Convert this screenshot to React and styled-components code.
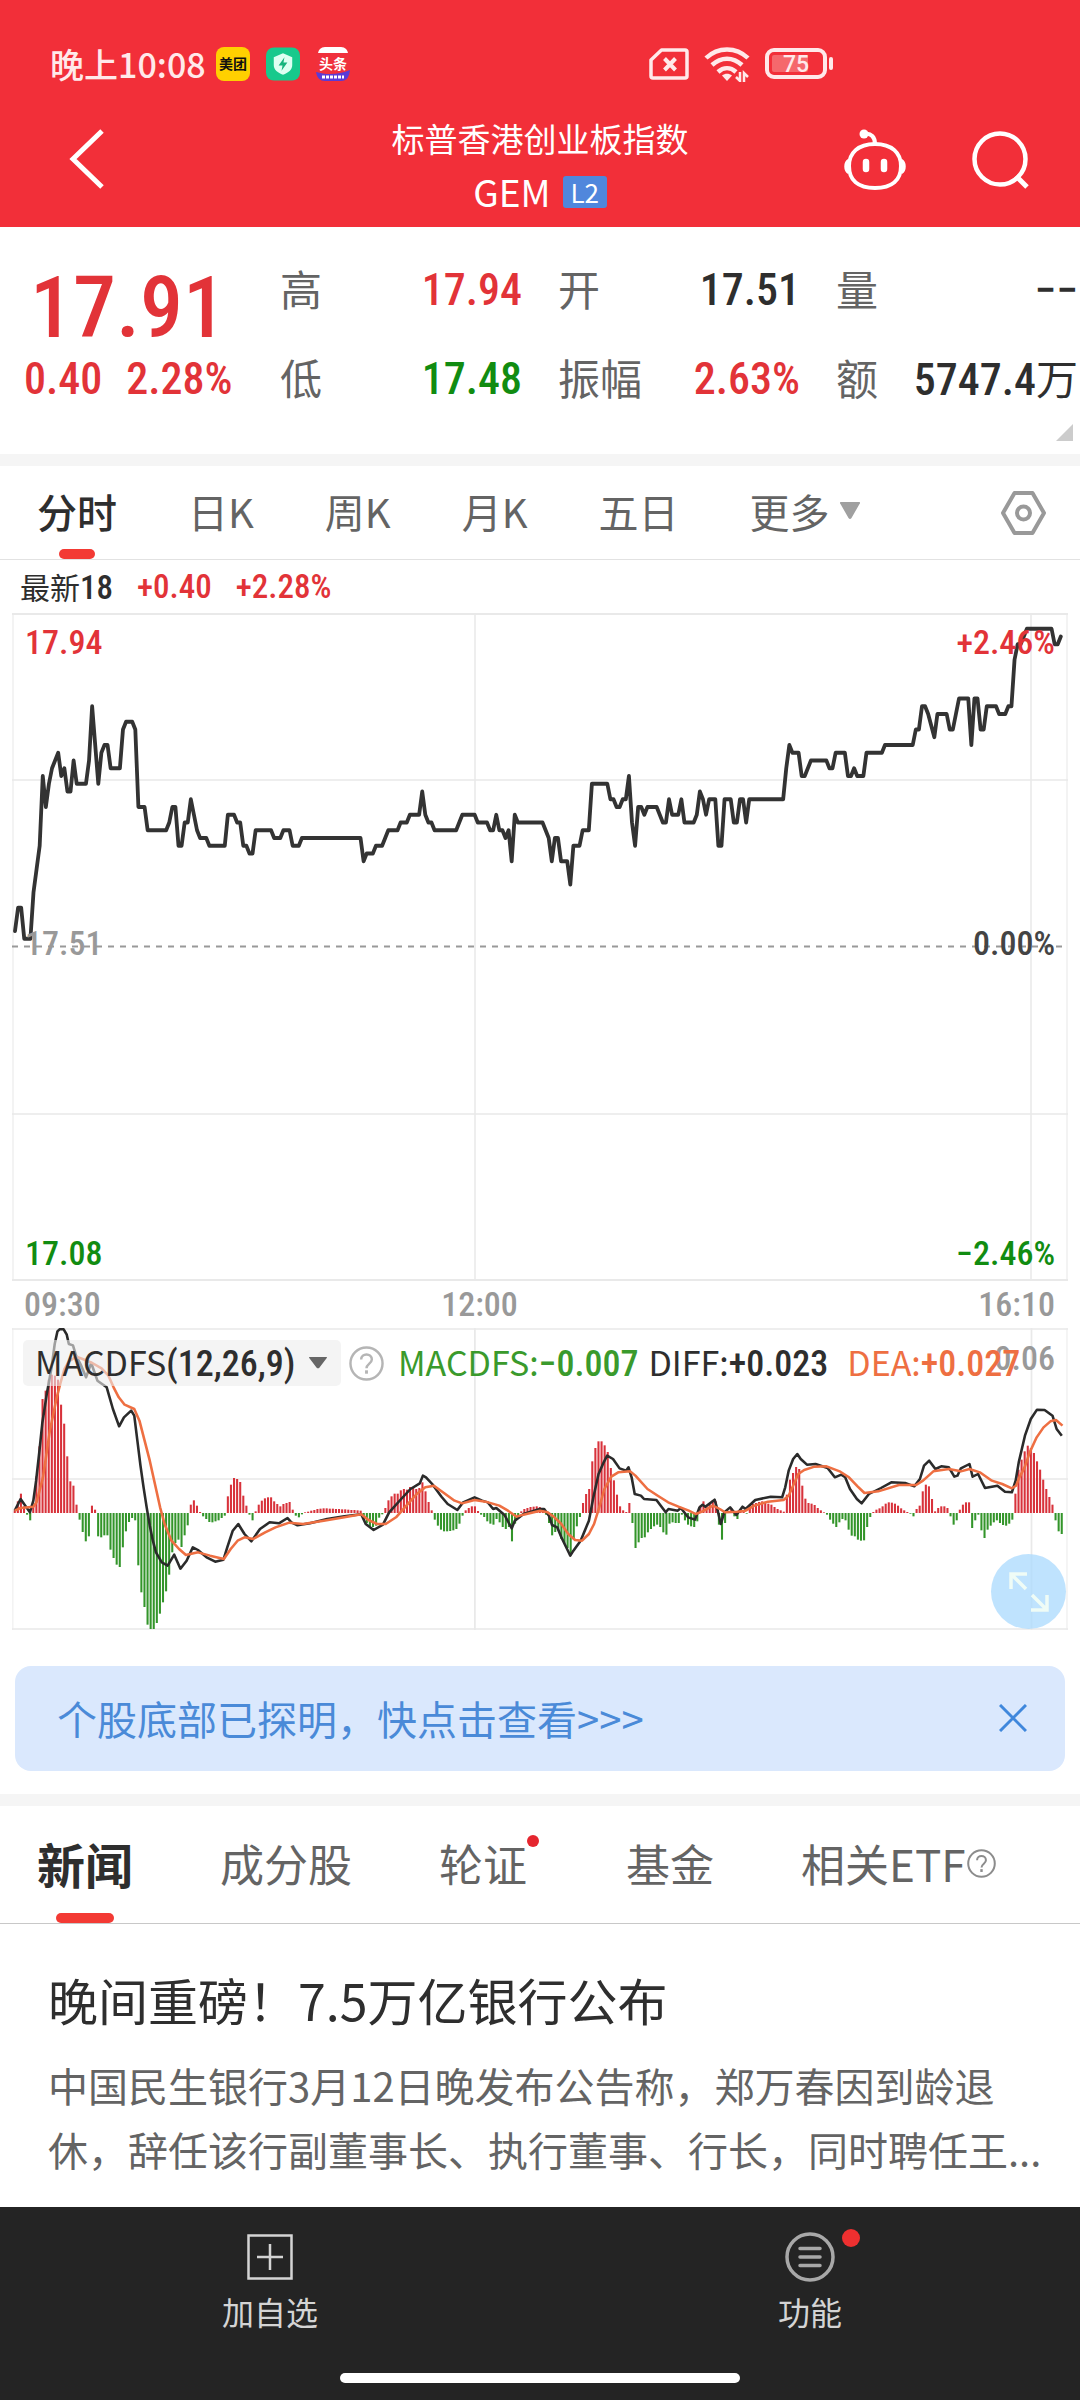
import React, { useState } from "react";
import styled, { createGlobalStyle } from "styled-components";

const RED = "#e23338";
const GREEN = "#118c11";
const DARK = "#2e2e2e";
const GREY = "#646464";
const NUMBER_FONT = `"Roboto Condensed", "Liberation Sans Narrow", Roboto, sans-serif`;

const GlobalStyle = createGlobalStyle`
  * {
    box-sizing: border-box;
  }

  body {
    margin: 0;
    background: #fff;
    color: ${DARK};
    font-family: "Noto Sans CJK SC", "Noto Sans", sans-serif;
  }

  button {
    padding: 0;
    border: 0;
    background: none;
    color: inherit;
    font: inherit;
    cursor: pointer;
  }

  svg {
    display: block;
    flex: none;
  }
`;

const Page = styled.div`
  display: flex;
  flex-direction: column;
  min-height: 100vh;
  overflow-x: hidden;
`;

/* ---------- header ---------- */

const Header = styled.header`
  background: #f22f39;
  color: #fff;
`;

const StatusBar = styled.div`
  display: flex;
  align-items: center;
  justify-content: space-between;
  padding: 44px 246px 0 50px;
  height: 84px;
  color: #ffe9ea;
`;

const StatusGroup = styled.div`
  display: flex;
  align-items: center;
  gap: ${props => props.$gap}px;
`;

const Clock = styled.span`
  margin-right: -6px;
  font-size: 34px;
  font-weight: 500;
  line-height: 40px;
`;

const Nav = styled.nav`
  display: grid;
  grid-template-columns: 1fr auto 1fr;
  padding: 28px 48px 9px 66px;
`;

const NavSide = styled.div`
  display: flex;
  justify-content: ${props => (props.$end ? "flex-end" : "flex-start")};
  align-items: center;
  gap: 63px;
  height: 96px;
`;

const TitleBlock = styled.div`
  display: flex;
  flex-direction: column;
  align-items: center;
  margin-left: -18px;
`;

const Title = styled.h1`
  margin: 0;
  font-size: 33px;
  font-weight: 400;
  line-height: 53px;
`;

const Code = styled.div`
  display: flex;
  align-items: center;
  gap: 12px;
  font-size: 37px;
  line-height: 53px;
`;

const LevelBadge = styled.span`
  width: 44px;
  border-radius: 3px;
  background: #5087dc;
  font-size: 26px;
  line-height: 32px;
  text-align: center;
`;

/* ---------- quote ---------- */

const Quote = styled.section`
  position: relative;
  display: flex;
  height: 227px;
  padding: 36px 2px 0 0;
`;

const Num = styled.span`
  color: ${props => props.$color || "inherit"};
  font-family: ${NUMBER_FONT};
  font-weight: 500;
`;

const PriceBlock = styled.div`
  width: 280px;
  padding-left: 24px;
`;

const Price = styled.div`
  padding-left: 6px;
  color: ${RED};
  font-family: ${NUMBER_FONT};
  font-size: 86px;
  font-weight: 500;
  line-height: 90px;
`;

const Change = styled.div`
  display: flex;
  gap: 24px;
  color: ${RED};
  font-size: 44px;
  line-height: 53px;
`;

const Stats = styled.dl`
  display: grid;
  flex: 1;
  grid-template-columns: repeat(3, 1fr);
  grid-auto-rows: 54px;
  gap: 35px 36px;
  margin: 0;
`;

const Stat = styled.div`
  display: flex;
  justify-content: space-between;
  line-height: 54px;
  white-space: nowrap;
`;

const StatLabel = styled.dt`
  color: ${GREY};
  font-size: 42px;
  line-height: 50px;
`;

const StatValue = styled.dd`
  margin: 0;
  color: ${props => props.$color || DARK};
  font-family: ${NUMBER_FONT}, "Noto Sans CJK SC";
  font-size: 44px;
  font-weight: 500;
`;

const Unit = styled.span`
  font-family: "Noto Sans CJK SC", sans-serif;
  font-size: 42px;
  font-weight: 400;
  line-height: 50px;
`;

const Corner = styled.span`
  position: absolute;
  right: 7px;
  bottom: 13px;
  border: solid transparent;
  border-width: 0 0 17px 17px;
  border-bottom-color: #ccc;
`;

const Band = styled.div`
  height: 12px;
  background: #f5f5f5;
`;

/* ---------- tabs ---------- */

const Tabs = styled.div`
  display: flex;
  align-items: stretch;
  gap: ${props => props.$gap}px;
  height: ${props => props.$height}px;
  padding: 0 34px 0 37px;
  border-bottom: 1px solid ${props => props.$line};
  color: ${GREY};
  font-size: ${props => props.$size}px;
`;

const Tab = styled.button`
  position: relative;
  display: flex;
  align-items: center;
  gap: 10px;
  padding-bottom: 3px;
  white-space: nowrap;

  &[aria-selected="true"] {
    color: ${DARK};
    font-size: ${props => props.$activeSize}px;
    font-weight: ${props => props.$activeWeight};
  }

  &[aria-selected="true"]::after {
    content: "";
    position: absolute;
    bottom: 0;
    left: 50%;
    width: ${props => props.$bar}px;
    height: 10px;
    margin-left: ${props => -props.$bar / 2}px;
    border-radius: 5px;
    background: #f33a34;
  }
`;

const SettingsButton = styled.button`
  margin-left: auto;
`;

const TabDot = styled.i`
  align-self: flex-start;
  width: 12px;
  height: 12px;
  margin: 29px 0 0 -10px;
  border-radius: 50%;
  background: #e5262f;
`;

const TabHint = styled.span`
  margin-left: -9px;
`;

/* ---------- charts ---------- */

const Latest = styled.div`
  display: flex;
  gap: 24px;
  height: 53px;
  padding-left: 20px;
  color: ${DARK};
  font-size: 30px;
  line-height: 53px;

  ${Num} {
    font-size: 33px;
  }
`;

const ChartArea = styled.section`
  padding: 0 12px;
`;

const Panel = styled.div`
  position: relative;
  height: ${props => props.$height}px;

  > svg {
    width: 100%;
    height: 100%;
  }
`;

const AxisLabel = styled.span`
  position: absolute;
  ${props => (props.$right ? "right: 13px" : "left: 13px")};
  top: ${props => props.$top}px;
  color: ${props => props.$color};
  font-family: ${NUMBER_FONT};
  font-size: 34px;
  font-weight: 500;
  line-height: 40px;
`;

const TimeAxis = styled.div`
  display: flex;
  justify-content: space-between;
  padding: 0 13px 0 12px;
  color: #999;
  font-family: ${NUMBER_FONT};
  font-size: 34px;
  font-weight: 500;
  line-height: 47px;

  span:nth-child(2) {
    margin-right: 120px;
  }
`;

const MacdHeader = styled.div`
  position: absolute;
  top: 11px;
  left: 11px;
  display: flex;
  align-items: center;
  font-size: 34px;
  line-height: 46px;
  white-space: nowrap;

  ${Num} {
    font-size: 36px;
  }
`;

const IndicatorButton = styled.button`
  display: flex;
  align-items: center;
  justify-content: space-between;
  width: 318px;
  height: 46px;
  margin-right: 8px;
  padding: 0 14px 0 12px;
  border-radius: 5px;
  background: rgba(236, 236, 236, 0.6);
`;

const Reading = styled.span`
  margin-left: ${props => props.$space}px;
  color: ${props => props.$color};
`;

const ExpandButton = styled.button`
  position: absolute;
  right: 2px;
  bottom: 1px;
  display: flex;
  align-items: center;
  justify-content: center;
  width: 75px;
  height: 75px;
  border-radius: 50%;
  background: rgba(170, 217, 254, 0.75);
`;

/* ---------- banner ---------- */

const Banner = styled.div`
  display: flex;
  align-items: center;
  justify-content: space-between;
  height: 105px;
  margin: 36px 15px 23px;
  padding: 0 38px 2px 42px;
  border-radius: 16px;
  background: #dae8fd;
  color: #4a8ad8;
  font-size: 40px;
`;

const BannerLink = styled.a`
  color: inherit;
  text-decoration: none;
`;

/* ---------- news ---------- */

const News = styled.article`
  flex: 1;
  padding: 40px 30px 24px 48px;
`;

const Headline = styled.h2`
  margin: 0 0 19px;
  font-size: 50px;
  font-weight: 400;
  line-height: 70px;
`;

const Summary = styled.p`
  margin: 0;
  color: ${GREY};
  font-size: 40px;
  line-height: 64px;
`;

/* ---------- footer ---------- */

const Footer = styled.footer`
  padding: 22px 0 17px;
  background: #242424;
  color: #d4d4d4;
`;

const Actions = styled.div`
  display: flex;
`;

const Action = styled.button`
  display: flex;
  flex: 1;
  flex-direction: column;
  align-items: center;
  gap: 2px;
  height: 144px;
  font-size: 32px;
  line-height: 48px;
`;

const ActionIcon = styled.span`
  position: relative;
  display: flex;
  align-items: center;
  justify-content: center;
  width: 56px;
  height: 56px;
`;

const ActionDot = styled.i`
  position: absolute;
  top: 0;
  right: -22px;
  width: 18px;
  height: 18px;
  border-radius: 50%;
  background: #ee3030;
`;

const HomeBar = styled.div`
  width: 37%;
  height: 10px;
  margin: 0 auto;
  border-radius: 5px;
  background: #fff;
`;

/* ---------- data ---------- */

// [minute, ticks of 0.01 above the 17.51 open]
const PRICES = [
  [0, 2], [1, 5], [2, 5], [3, 1], [5, 1], [6, 7], [7, 10], [8, 13], [9, 22], [10, 18],
  [11, 21], [12, 23], [14, 25], [15, 22], [16, 23], [17, 20], [18, 20], [19, 24], [20, 21], [23, 21],
  [24, 24], [25, 31], [26, 26], [27, 21], [28, 25], [29, 26], [30, 26], [31, 23], [34, 23], [35, 28],
  [36, 29], [38, 29], [39, 28], [40, 18], [42, 18], [43, 15], [49, 15], [50, 16], [51, 18], [52, 18],
  [53, 13], [54, 13], [55, 16], [56, 16], [57, 19], [58, 17], [59, 15], [60, 14], [62, 14], [63, 13],
  [68, 13], [69, 17], [71, 17], [72, 16], [73, 16], [74, 13], [75, 13], [76, 12], [77, 12], [78, 15],
  [83, 15], [84, 14], [86, 14], [87, 15], [89, 15], [90, 13], [92, 13], [93, 14], [112, 14], [113, 11],
  [114, 12], [116, 12], [117, 13], [119, 13], [120, 14], [121, 15], [124, 15], [125, 16], [127, 16],
  [128, 17], [131, 17], [132, 20], [133, 17], [134, 16], [135, 16], [136, 15], [143, 15], [145, 17],
  [149, 17], [150, 16], [153, 16], [154, 15], [155, 15], [156, 17], [157, 15], [158, 15], [159, 14],
  [160, 15], [161, 11], [162, 17], [163, 16], [171, 16], [173, 14], [174, 11], [175, 14], [176, 14],
  [177, 11], [179, 11], [180, 8], [181, 13], [183, 13], [184, 15], [186, 15], [187, 21], [192, 21],
  [193, 19], [194, 19], [195, 18], [196, 18], [197, 19], [198, 19], [199, 22], [200, 16], [201, 13],
  [202, 18], [203, 18], [204, 17], [205, 18], [208, 18], [209, 17], [210, 16], [211, 16], [212, 19],
  [213, 17], [215, 17], [216, 19], [217, 16], [220, 16], [221, 17], [222, 20], [223, 19], [224, 17],
  [225, 19], [227, 19], [228, 13], [229, 13], [230, 19], [232, 19], [233, 16], [234, 16], [235, 19],
  [236, 19], [237, 16], [238, 19], [249, 19], [250, 23], [251, 26], [252, 25], [254, 25], [255, 22],
  [256, 22], [258, 24], [263, 24], [264, 23], [265, 23], [266, 25], [269, 25], [270, 22], [271, 22],
  [272, 23], [273, 22], [275, 22], [276, 25], [281, 25], [282, 26], [291, 26], [292, 28], [293, 28],
  [294, 31], [295, 31], [296, 30], [298, 27], [299, 30], [302, 30], [303, 28], [304, 28], [305, 30],
  [306, 32], [309, 32], [310, 26], [311, 32], [312, 32], [313, 28], [314, 28], [315, 31], [318, 31],
  [319, 30], [321, 30], [322, 31], [323, 31], [324, 37], [325, 39], [326, 39], [328, 41], [336, 41],
  [337, 39], [338, 39], [339, 40],
];

// one histogram value per minute
const HISTOGRAM = [
  8, 35, 58, 20, -5, -22, 25, 110, 200, 342, 367, 400, 415, 412, 400, 325, 268, 170, 95, 82,
  25, -20, -57, -85, -70, 22, 10, -70, -73, -67, -67, -110, -135, -155, -162, -103, -55, -27, -15, -22,
  -157, -238, -282, -335, -348, -348, -330, -302, -268, -235, -185, -118, -90, -80, -102, -67, -37, 25, 38, 22,
  3, -10, -18, -27, -28, -25, -22, -15, -8, 50, 85, 105, 102, 93, 52, 22, -5, -22, 5, 25,
  37, 44, 47, 47, 35, 27, 20, 27, 30, 33, 10, -8, -13, -4, 2, 4, 7, 9, 12, 13,
  14, 14, 13, 13, 12, 12, 11, 11, 10, 9, 9, 8, 7, -20, -30, -40, -42, -38, -14, -4,
  15, 38, 50, 58, 58, 68, 72, 70, 78, 78, 72, 75, 92, 65, 33, 8, -20, -38, -50, -55,
  -55, -54, -52, -48, -32, -8, 8, 15, 20, 20, 6, -5, -12, -25, -32, -35, -18, -28, -42, -48,
  -42, -85, -32, -12, 5, 12, 15, 18, 19, 20, 18, 12, -5, -30, -67, -57, -52, -78, -92, -105,
  -127, -78, -40, -12, 30, 57, 72, 155, 195, 215, 215, 203, 183, 135, 98, 55, 20, 8, 3, 30,
  -30, -105, -88, -75, -73, -58, -48, -40, -35, -42, -58, -65, -32, -28, -30, -30, -5, -22, -35, -40,
  -42, -25, 22, 35, 20, 28, 38, 35, -35, -80, -30, 5, 15, -10, -18, 8, 8, -2, 20, 27,
  30, 33, 35, 33, 28, 25, 18, 12, 8, 4, 55, 100, 120, 138, 132, 82, 43, 30, 28, 24,
  15, 8, 2, -5, -20, -32, -42, -28, -18, -22, -50, -68, -70, -80, -83, -82, -42, -12, 3, 10,
  14, 20, 28, 32, 31, 28, 22, 14, 8, 3, -2, -10, 12, 22, 65, 85, 80, 42, 5, 15,
  20, 20, 15, -10, -35, -22, 10, 25, 32, 32, -45, -22, -5, -52, -75, -50, -38, -28, -22, -30,
  -36, -38, -32, -20, 58, 130, 160, 185, 202, 195, 180, 155, 130, 100, 72, 48, 25, -22, -55, -63,
];

const DIFF = `43,930 60,895 87,935 97,900 105,840 114,757 123,667 136,580 150,500 159,430 167,392 173,386
  185,386 194,402 200,430 212,434 221,465 236,495 250,530 265,487 283,540 310,560 328,625 346,677 360,650
  381,630 390,645 399,720 408,795 417,860 426,920 435,975 444,1020 453,1055 470,1085 487,1095 506,1062
  524,1104 542,1080 560,1040 575,1048 600,1070 625,1083 649,1077 660,1040 676,990 692,970 710,1000
  730,1022 755,985 783,965 810,968 835,952 846,965 864,974 900,968 950,955 1000,947 1049,941 1062,970
  1085,988 1112,972 1130,935 1165,895 1192,865 1219,848 1228,825 1237,830 1255,850 1282,888 1300,910
  1328,928 1345,905 1378,890 1400,900 1416,905 1432,925 1441,922 1465,943 1486,983 1495,960 1520,940
  1568,925 1580,925 1594,945 1603,973 1618,980 1630,1010 1656,1065 1665,1050 1686,1020 1710,960 1723,890
  1738,820 1753,785 1763,765 1780,775 1799,803 1818,810 1825,800 1834,830 1843,880 1861,885 1870,895
  1906,898 1933,935 1941,925 1968,930 1977,922 1998,950 2018,957 2031,920 2040,912 2048,918 2075,897
  2084,930 2093,970 2103,935 2120,920 2138,943 2156,918 2165,925 2193,898 2238,888 2271,890 2280,860
  2290,810 2303,775 2315,760 2325,775 2343,792 2368,790 2403,802 2424,830 2443,822 2454,830 2468,865
  2488,895 2502,908 2523,880 2558,862 2588,845 2628,847 2655,857 2671,835 2683,795 2698,780 2716,805
  2733,797 2755,800 2771,828 2780,825 2790,803 2815,790 2824,828 2840,820 2860,862 2896,855 2918,873
  2938,875 2949,840 2958,785 2976,705 2993,655 3011,627 3033,628 3056,645 3068,685 3083,705`;

const DEA = `43,930 60,922 97,918 106,905 115,870 125,830 135,760 145,690 155,640 165,590 175,550 187,505
  200,482 222,468 240,475 268,487 295,503 315,525 330,560 345,590 362,612 390,625 405,660 420,720 435,780
  450,850 465,920 478,970 498,1020 520,1045 540,1063 575,1055 610,1065 650,1075 670,1045 690,1020 710,1010
  735,1015 770,995 800,980 840,966 880,970 940,960 1000,950 1049,941 1070,958 1095,970 1120,970 1150,950
  1180,915 1210,880 1235,860 1260,855 1290,878 1320,900 1342,908 1378,898 1410,903 1450,915 1475,930
  1500,948 1520,942 1568,930 1590,935 1610,950 1630,970 1650,1000 1670,1018 1690,1020 1710,1000 1725,970
  1740,920 1755,865 1775,828 1795,815 1830,812 1845,825 1880,865 1910,885 1940,905 1970,918 2000,930
  2020,940 2040,932 2070,915 2090,925 2105,935 2140,933 2165,930 2190,915 2230,903 2275,898 2290,885
  2305,850 2318,820 2335,808 2365,798 2400,797 2440,813 2465,830 2490,857 2510,877 2550,872 2610,853
  2660,853 2680,840 2710,812 2755,805 2790,812 2815,805 2845,815 2880,840 2910,850 2938,863 2950,855
  2960,830 2975,800 2990,755 3010,710 3030,680 3050,662 3066,658 3085,675`;

const STATS = [
  { label: "高", value: "17.94", color: RED },
  { label: "开", value: "17.51" },
  { label: "量", value: "−−" },
  { label: "低", value: "17.48", color: GREEN },
  { label: "振幅", value: "2.63%", color: RED },
  { label: "额", value: "5747.4", unit: "万" },
];

const PERIODS = ["分时", "日K", "周K", "月K", "五日"];

/* ---------- icons ---------- */

const MeituanIcon = () => (
  <svg width="34" height="34" viewBox="0 0 34 34">
    <rect width="34" height="34" rx="8" fill="#ffd000" />
    <text x="17" y="22" textAnchor="middle" fontSize="14" fontWeight="700" fill="#111">美团</text>
  </svg>
);

const ShieldIcon = () => (
  <svg width="34" height="34" viewBox="0 0 35 34">
    <rect width="35" height="34" rx="8" fill="#18c98c" />
    <path d="M17.500 6 27 10v8c0 5-4 8-9.500 10C12 26 8 23 8 18v-8z" fill="#dffff2" />
    <path d="M19 10l-6 8.500h4L16 24l6-8.500h-4z" fill="#18b47d" />
  </svg>
);

const ToutiaoIcon = () => (
  <svg width="34" height="34" viewBox="0 0 34 34">
    <path d="M2 7c0-4 3-7 7-7h16c4 0 7 3 7 7z" fill="#fff" />
    <rect x="1" y="6" width="32" height="21" fill="#f0303c" />
    <path d="M0 25c10 3 23 3 34-2-1 7-3 11-9 11H9c-5 0-8-3-9-9z" fill="#5a3ad6" />
    <text x="17" y="22" textAnchor="middle" fontSize="14" fontWeight="700" fill="#fff">头条</text>
    <path d="M6 30h22" stroke="#fff" strokeWidth="3" strokeDasharray="3 1" />
  </svg>
);

const SimIcon = () => (
  <svg width="40" height="32" viewBox="0 0 40 32" fill="none" stroke="currentColor" strokeWidth="3.500">
    <path d="M12.500 2H36q2 0 2 2v24q0 2-2 2H4q-2 0-2-2V12z" strokeLinejoin="round" />
    <path d="M15.500 10.500 26.500 22M26.500 10.500 15.500 22" strokeWidth="4" />
  </svg>
);

const WifiIcon = () => (
  <svg width="46" height="36" viewBox="0 0 46 36" fill="none" stroke="currentColor" strokeWidth="4.500">
    <path d="M2 12C14 .5 32 .5 44 12" />
    <path d="M8 19c9-8.500 21-8.500 30 0" />
    <path d="M14 26c5.500-5 12.500-5 18 0" />
    <path d="M18 29.500c3-2.500 7-2.500 10 0L23 35z" fill="currentColor" stroke="none" />
    <path d="M36 26v9l-4-4M40 36v-9l4 4" strokeWidth="2.500" />
  </svg>
);

const BatteryIcon = () => (
  <svg width="69" height="32" viewBox="0 0 69 32">
    <rect x="2" y="2" width="58" height="27" rx="7" fill="none" stroke="currentColor" strokeWidth="4" />
    <rect x="7" y="7" width="36" height="17" rx="2" fill="#f5686c" />
    <path d="M66 11v9" stroke="currentColor" strokeWidth="4" strokeLinecap="round" />
    <text x="31" y="24" textAnchor="middle" fontFamily="Roboto, sans-serif" fontSize="23" fontWeight="500" fill="currentColor">75</text>
  </svg>
);

const BackIcon = () => (
  <svg width="40" height="64" viewBox="0 0 40 64" fill="none" stroke="#fff" strokeWidth="5">
    <path d="M36 3 7 31l29 28" />
  </svg>
);

const RobotIcon = () => (
  <svg width="64" height="62" viewBox="0 0 64 62" fill="none" stroke="#fff" strokeWidth="4">
    <circle cx="21" cy="5" r="4.500" fill="#fff" stroke="none" />
    <path d="M22 5c6-1 10 3 10 10" />
    <path d="M32 15c17 0 26 9 26 22 0 14-9 22-26 22S6 51 6 37c0-13 9-22 26-22z" />
    <path d="M5 30c-5 2-5 13 0 15zM59 30c5 2 5 13 0 15z" fill="#fff" stroke="none" />
    <path d="M23 33v7M41 33v7" strokeWidth="6.500" strokeLinecap="round" />
  </svg>
);

const SearchIcon = () => (
  <svg width="62" height="60" viewBox="0 0 62 60" fill="none" stroke="#fff" strokeWidth="4.500">
    <circle cx="30" cy="29" r="25.500" />
    <path d="M46 46l11 11" strokeWidth="5" />
  </svg>
);

const GearIcon = () => (
  <svg width="45" height="44" viewBox="0 0 45 44" fill="none" stroke="#999" strokeWidth="4">
    <path d="M13.500 2h18L43 22 31.500 42h-18L2 22z" strokeLinejoin="round" />
    <circle cx="22.500" cy="22" r="6.500" />
  </svg>
);

const DownIcon = ({ width, height, color }) => (
  <svg width={width} height={height} viewBox="0 0 20 18" preserveAspectRatio="none">
    <path d="M1 0h18q2 0 .5 2l-8 14q-1.500 2-3 0L.5 2Q-1 0 1 0z" fill={color} />
  </svg>
);

const HelpIcon = ({ size, color }) => (
  <svg width={size} height={size} viewBox="0 0 36 36" fill="none" stroke={color} strokeWidth="2.500">
    <circle cx="18" cy="18" r="16.500" />
    <path d="M12.500 14c0-7 11-7 11 0 0 4-5.500 4.500-5.500 9" />
    <path d="M18 25v3.500" strokeWidth="3" />
  </svg>
);

const ExpandIcon = () => (
  <svg width="40" height="40" viewBox="0 0 40 40" fill="none" stroke="#effcf6" strokeWidth="3.500">
    <path d="M17 17 3 3M2 17V2h16M23 23l14 14M38 23v15H22" />
  </svg>
);

const CloseIcon = () => (
  <svg width="28" height="28" viewBox="0 0 28 28" stroke="#3f87dc" strokeWidth="3">
    <path d="M1 1l26 26M27 1 1 27" />
  </svg>
);

const AddIcon = () => (
  <svg width="46" height="46" viewBox="0 0 46 46" fill="none" stroke="#d4d4d4" strokeWidth="2.500">
    <rect x="1.500" y="1.500" width="43" height="43" />
    <path d="M23 10v26M10 23h26" />
  </svg>
);

const MenuIcon = () => (
  <svg width="50" height="50" viewBox="0 0 50 50" fill="none" stroke="#a8a8a8" strokeWidth="3.500">
    <circle cx="25" cy="25" r="23" />
    <path d="M15 16.500h20M15 25h20M15 33.500h20" strokeLinecap="round" />
  </svg>
);

/* ---------- charts ---------- */

const PriceChart = () => {
  const points = PRICES.map(([minute, ticks]) => `${3 + minute * 3.085},${333.5 - ticks * 7.75}`).join(" ");

  return (
    <svg viewBox="0 0 1056 668" preserveAspectRatio="none" fill="none" stroke="#e9e9e9" strokeWidth="2">
      <path d="M1 0v668M1055 0v668" stroke="#f3f3f3" />
      <path d="M0 1h1056M0 667h1056" />
      <path d="M0 167h1056M0 501h1056M463 0v668M1019 0v668" strokeWidth="1.500" />
      <path d="M0 333.500h1056" stroke="#999" strokeDasharray="6 6" />
      <polyline points={points} stroke="#333" strokeWidth="3.800" strokeLinejoin="round" strokeLinecap="round" />
    </svg>
  );
};

const MacdChart = () => (
  <svg viewBox="35 382 3066 906" preserveAspectRatio="none" fill="none">
    <g stroke="#e9e9e9" strokeWidth="5">
      <path d="M37 382v906M3098 382v906" stroke="#f3f3f3" />
      <path d="M35 385h3066M35 1285h3066" />
      <path d="M35 835h3066M1379 382v906M2995 382v906" />
    </g>
    {HISTOGRAM.map((value, i) => (
      <rect
        key={i}
        x={40 + i * 8.967}
        y={value > 0 ? 937 - value : 937}
        width="6"
        height={Math.abs(value)}
        fill={value > 0 ? "#d8323b" : "#33952a"}
      />
    ))}
    <polyline points={DIFF} stroke="#2b2b2b" strokeWidth="7.500" strokeLinejoin="round" />
    <polyline points={DEA} stroke="#ee6f42" strokeWidth="7.500" strokeLinejoin="round" />
  </svg>
);

const App = () => {
  const [period, setPeriod] = useState("分时");
  const [section, setSection] = useState("新闻");
  const [showBanner, setShowBanner] = useState(true);

  const sectionTab = (name, extra) => (
    <Tab
      role="tab"
      aria-selected={section === name}
      $activeSize={48}
      $activeWeight={700}
      $bar={58}
      onClick={() => setSection(name)}
    >
      {name}
      {extra}
    </Tab>
  );

  return (
    <Page>
      <GlobalStyle />
      <Header>
        <StatusBar>
          <StatusGroup $gap={16}>
            <Clock>晚上10:08</Clock>
            <MeituanIcon />
            <ShieldIcon />
            <ToutiaoIcon />
          </StatusGroup>
          <StatusGroup $gap={15}>
            <SimIcon />
            <WifiIcon />
            <BatteryIcon />
          </StatusGroup>
        </StatusBar>
        <Nav>
          <NavSide>
            <button aria-label="返回"><BackIcon /></button>
          </NavSide>
          <TitleBlock>
            <Title>标普香港创业板指数</Title>
            <Code>
              GEM <LevelBadge>L2</LevelBadge>
            </Code>
          </TitleBlock>
          <NavSide $end>
            <button aria-label="智能助手"><RobotIcon /></button>
            <button aria-label="搜索"><SearchIcon /></button>
          </NavSide>
        </Nav>
      </Header>

      <Quote>
        <PriceBlock>
          <Price>17.91</Price>
          <Change>
            <Num>0.40</Num>
            <Num>2.28%</Num>
          </Change>
        </PriceBlock>
        <Stats>
          {STATS.map(({ label, value, unit, color }) => (
            <Stat key={label}>
              <StatLabel>{label}</StatLabel>
              <StatValue $color={color}>
                {value}
                {unit && <Unit>{unit}</Unit>}
              </StatValue>
            </Stat>
          ))}
        </Stats>
        <Corner />
      </Quote>
      <Band />

      <Tabs role="tablist" $gap={71} $height={94} $size={40} $line="#e2e2e2">
        {PERIODS.map(name => (
          <Tab
            key={name}
            role="tab"
            aria-selected={period === name}
            $activeSize={40}
            $activeWeight={500}
            $bar={36}
            onClick={() => setPeriod(name)}
          >
            {name}
          </Tab>
        ))}
        <Tab role="tab" aria-selected={false}>
          更多
          <DownIcon width={20} height={18} color="#a0a0a0" />
        </Tab>
        <SettingsButton aria-label="设置"><GearIcon /></SettingsButton>
      </Tabs>

      <Latest>
        <span>最新<Num>18</Num></span>
        <Num $color={RED}>+0.40</Num>
        <Num $color={RED}>+2.28%</Num>
      </Latest>

      <ChartArea>
        <Panel $height={668}>
          <PriceChart />
          <AxisLabel $top={9} $color={RED}>17.94</AxisLabel>
          <AxisLabel $top={9} $color={RED} $right>+2.46%</AxisLabel>
          <AxisLabel $top={310} $color="#999">17.51</AxisLabel>
          <AxisLabel $top={310} $color="#444" $right>0.00%</AxisLabel>
          <AxisLabel $top={620} $color={GREEN}>17.08</AxisLabel>
          <AxisLabel $top={620} $color={GREEN} $right>−2.46%</AxisLabel>
        </Panel>
        <TimeAxis>
          <span>09:30</span>
          <span>12:00</span>
          <span>16:10</span>
        </TimeAxis>
        <Panel $height={302}>
          <MacdChart />
          <AxisLabel $top={10} $color="#999" $right>0.06</AxisLabel>
          <MacdHeader>
            <IndicatorButton>
              <span>MACDFS<Num>(12,26,9)</Num></span>
              <DownIcon width={18} height={12} color="#666" />
            </IndicatorButton>
            <HelpIcon size={35} color="#b5b5b5" />
            <Reading $space={14} $color="#3a9a2c">MACDFS:<Num>−0.007</Num></Reading>
            <Reading $space={10} $color={DARK}>DIFF:<Num>+0.023</Num></Reading>
            <Reading $space={19} $color="#ee6f42">DEA:<Num>+0.027</Num></Reading>
          </MacdHeader>
          <ExpandButton aria-label="全屏"><ExpandIcon /></ExpandButton>
        </Panel>
      </ChartArea>

      {showBanner && (
        <Banner>
          <BannerLink href="#">个股底部已探明，快点击查看&gt;&gt;&gt;</BannerLink>
          <button aria-label="关闭" onClick={() => setShowBanner(false)}><CloseIcon /></button>
        </Banner>
      )}
      <Band />

      <Tabs role="tablist" $gap={87} $height={118} $size={44} $line="#c8c8c8">
        {sectionTab("新闻")}
        {sectionTab("成分股")}
        {sectionTab("轮证", <TabDot />)}
        {sectionTab("基金")}
        {sectionTab("相关ETF", <TabHint><HelpIcon size={29} color="#8c8c8c" /></TabHint>)}
      </Tabs>

      <News>
        <Headline>晚间重磅！7.5万亿银行公布</Headline>
        <Summary>
          中国民生银行3月12日晚发布公告称，郑万春因到龄退休，辞任该行副董事长、执行董事、行长，同时聘任王...
        </Summary>
      </News>

      <Footer>
        <Actions>
          <Action>
            <ActionIcon><AddIcon /></ActionIcon>
            加自选
          </Action>
          <Action>
            <ActionIcon>
              <MenuIcon />
              <ActionDot />
            </ActionIcon>
            功能
          </Action>
        </Actions>
        <HomeBar />
      </Footer>
    </Page>
  );
};

export default App;
